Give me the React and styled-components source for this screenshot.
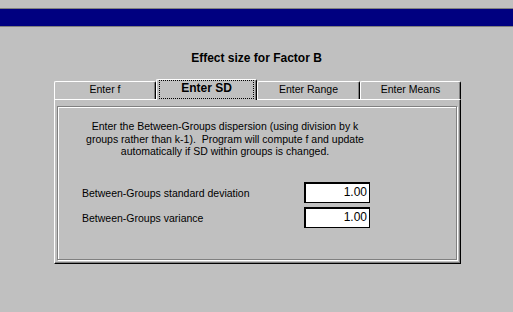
import React from "react";
import styled, { createGlobalStyle } from "styled-components";

const GlobalStyle = createGlobalStyle`
  html, body {
    margin: 0;
    padding: 0;
    background: #c0c0c0;
  }
  body {
    font-family: "Liberation Sans", Arial, sans-serif;
    font-size: 10.5px;
    color: #000;
  }
`;

const Window = styled.div`
  width: 513px;
  height: 312px;
  overflow: hidden;
  background: #c0c0c0;
  padding-top: 8px;
  box-sizing: border-box;
`;

const TitleBar = styled.div`
  height: 17px;
  background: #000080;
  border-top: 1px solid #808080;
  border-bottom: 1px solid #808080;
`;

const Heading = styled.h1`
  margin: 25px 0 0;
  height: 19px;
  font-size: 12px;
  font-weight: bold;
  text-align: center;
  line-height: 13px;
`;

const TabControl = styled.div`
  width: 407px;
  margin-left: 54px;
  margin-top: 8px;
`;

const TabRow = styled.div`
  display: flex;
  align-items: flex-end;
  height: 20px;
  position: relative;
  z-index: 1;
`;

const Tab = styled.div`
  box-sizing: border-box;
  width: ${(p) => p.$width}px;
  height: ${(p) => (p.$active ? 21 : 18)}px;
  margin-bottom: ${(p) => (p.$active ? -1 : 0)}px;
  border-top: 1px solid #fff;
  border-left: 1px solid #fff;
  border-right: 1px solid #000;
  box-shadow: inset -1px 0 0 #808080;
  border-radius: 2px 2px 0 0;
  background: #c0c0c0;
  display: flex;
  align-items: flex-start;
  justify-content: center;
  padding-top: ${(p) => (p.$active ? 0 : 1)}px;
  line-height: 13px;
  font-weight: ${(p) => (p.$active ? "bold" : "normal")};
  font-size: ${(p) => (p.$active ? 12 : 10.5)}px;
`;

const FocusLabel = styled.span`
  box-sizing: border-box;
  width: 95px;
  height: 19px;
  border: 1px dotted #000;
  padding-top: 1px;
  text-align: center;
`;

const Page = styled.div`
  box-sizing: border-box;
  height: 165px;
  border-top: 1px solid #fff;
  border-left: 1px solid #fff;
  border-right: 1px solid #000;
  border-bottom: 1px solid #000;
  box-shadow: inset -1px -1px 0 #808080;
  padding: 6px 3px 3px 2px;
`;

const Frame = styled.div`
  box-sizing: border-box;
  height: 100%;
  border: 1px solid #808080;
  box-shadow: 1px 1px 0 #fff, inset 1px 1px 0 #fff;
  padding-top: 13px;
`;

const Description = styled.p`
  margin: 0 0 0 17px;
  width: 300px;
  text-align: center;
  line-height: 12.5px;
  white-space: nowrap;
`;

const Form = styled.div`
  display: grid;
  grid-template-columns: 222px 66px;
  row-gap: 3px;
  margin: 24px 0 0 24px;
  align-items: center;
`;

const Label = styled.span`
  line-height: 21px;
  padding-top: 1px;
`;

const Field = styled.div`
  box-sizing: border-box;
  height: 21px;
  background: #fff;
  border: 1px solid #000;
  border-top-width: 2px;
  border-left-width: 2px;
  text-align: right;
  padding-right: 2px;
  line-height: 17px;
  font-size: 12px;
`;

const tabs = [
  { label: "Enter f", width: 102 },
  { label: "Enter SD", width: 101, active: true },
  { label: "Enter Range", width: 103 },
  { label: "Enter Means", width: 101 },
];

const fields = [
  { label: "Between-Groups standard deviation", value: "1.00" },
  { label: "Between-Groups variance", value: "1.00" },
];

export default function App() {
  return (
    <Window>
      <GlobalStyle />
      <TitleBar />
      <Heading>Effect size for Factor B</Heading>
      <TabControl>
        <TabRow>
          {tabs.map((t) => (
            <Tab key={t.label} $width={t.width} $active={t.active}>
              {t.active ? <FocusLabel>{t.label}</FocusLabel> : t.label}
            </Tab>
          ))}
        </TabRow>
        <Page>
          <Frame>
            <Description>
              Enter the Between-Groups dispersion (using division by k
              <br />
              groups rather than k-1).&nbsp; Program will compute f and update
              <br />
              automatically if SD within groups is changed.
            </Description>
            <Form>
              {fields.map((f) => (
                <React.Fragment key={f.label}>
                  <Label>{f.label}</Label>
                  <Field>{f.value}</Field>
                </React.Fragment>
              ))}
            </Form>
          </Frame>
        </Page>
      </TabControl>
    </Window>
  );
}
